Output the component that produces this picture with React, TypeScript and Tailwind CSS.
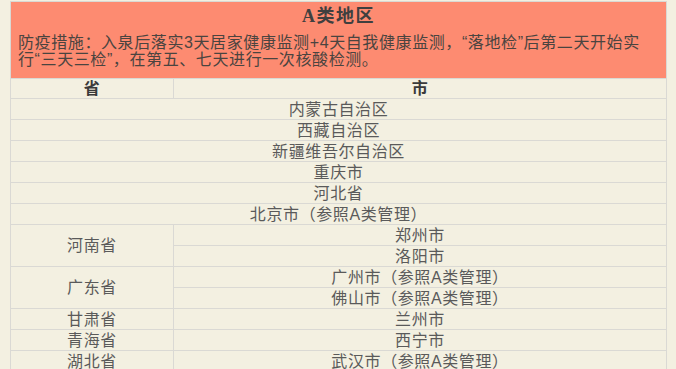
import React from "react";

const font = "'Liberation Sans', 'Noto Sans CJK SC', sans-serif";

type Row =
  | { kind: "full"; text: string }
  | { kind: "group"; prov: string; cities: string[] };

const rows: Row[] = [
  { kind: "full", text: "内蒙古自治区" },
  { kind: "full", text: "西藏自治区" },
  { kind: "full", text: "新疆维吾尔自治区" },
  { kind: "full", text: "重庆市" },
  { kind: "full", text: "河北省" },
  { kind: "full", text: "北京市（参照A类管理）" },
  { kind: "group", prov: "河南省", cities: ["郑州市", "洛阳市"] },
  { kind: "group", prov: "广东省", cities: ["广州市（参照A类管理）", "佛山市（参照A类管理）"] },
  { kind: "group", prov: "甘肃省", cities: ["兰州市"] },
  { kind: "group", prov: "青海省", cities: ["西宁市"] },
  { kind: "group", prov: "湖北省", cities: ["武汉市（参照A类管理）"] },
];

const td = "border border-[#dad9d4] h-[21px] p-0 text-center align-middle leading-[19px]";

export default function App() {
  return (
    <div className="min-h-[369px] w-[676px] bg-[#f3f0e1] pt-px pl-[10px]" style={{ fontFamily: font }}>
      <table className="w-[657px] table-fixed border-collapse text-[16px] tracking-[0.6px] text-[#5a5a5a]">
        <colgroup>
          <col className="w-[163px]" />
          <col />
        </colgroup>
        <tbody>
          <tr>
            <td colSpan={2} className="border border-[#dad9d4] bg-[#fd8b71] p-0 h-[77px] align-top">
              <div
                className="pt-[2px] h-[32px] text-center text-[18px] font-bold leading-[24px] tracking-[1.5px] text-[#3f3f3f]"
                style={{ fontFamily: "'Liberation Serif', 'Noto Sans CJK SC', serif" }}
              >
                A类地区
              </div>
              <p className="pl-[7px] text-[16px] leading-[17px] text-[#4a4440]">
                防疫措施：入泉后落实3天居家健康监测+4天自我健康监测，“落地检”后第二天开始实
                <br />
                行“三天三检”，在第五、七天进行一次核酸检测。
              </p>
            </td>
          </tr>
          <tr className="font-bold text-[#3a3a3a]">
            <td className="border border-[#dad9d4] h-[20px] p-0 text-center align-middle leading-[19px]">省</td>
            <td className="border border-[#dad9d4] h-[20px] p-0 text-center align-middle leading-[19px]">市</td>
          </tr>
          {rows.map((r, i) =>
            r.kind === "full" ? (
              <tr key={i}>
                <td colSpan={2} className={td}>
                  {r.text}
                </td>
              </tr>
            ) : (
              r.cities.map((c, j) => (
                <tr key={`${i}-${j}`}>
                  {j === 0 && (
                    <td rowSpan={r.cities.length} className={td}>
                      {r.prov}
                    </td>
                  )}
                  <td className={td}>{c}</td>
                </tr>
              ))
            )
          )}
        </tbody>
      </table>
    </div>
  );
}
